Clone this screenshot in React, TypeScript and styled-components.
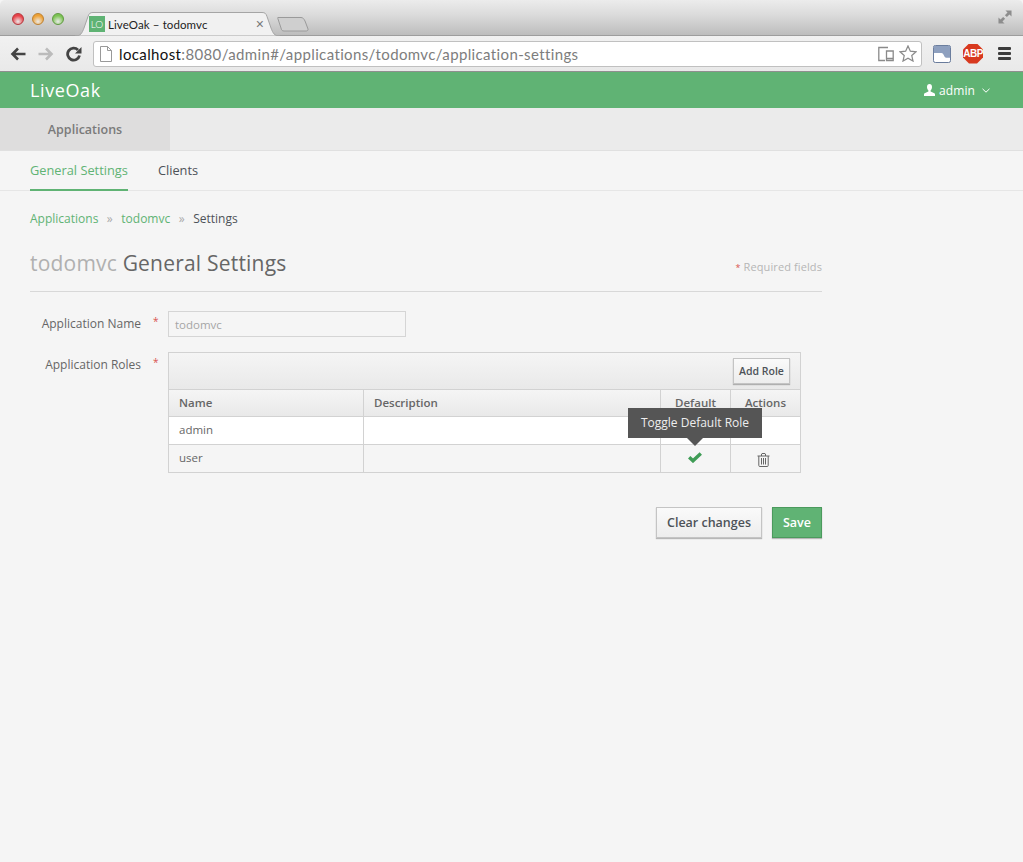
import React from 'react';
import styled, { createGlobalStyle } from 'styled-components';

const GlobalStyle = createGlobalStyle`
  html, body {
    margin: 0;
    padding: 0;
    height: 100%;
    background: #f5f5f5;
  }
  body {
    font-family: 'Open Sans', 'Noto Sans', sans-serif;
    color: #4d5258;
  }
  * {
    box-sizing: border-box;
  }
`;

const Page = styled.div`
  width: 1023px;
  height: 862px;
  overflow: hidden;
  display: flex;
  flex-direction: column;
  background: #f5f5f5;
`;

/* browser window */
const TitleBar = styled.div`
  height: 36px;
  display: flex;
  align-items: flex-end;
  padding: 0 11px 0 12px;
  background: linear-gradient(#ececec 0%, #dcdcdc 40%, #bdbdbd 100%);
  border-bottom: 1px solid #9d9d9d;
  border-radius: 5px 5px 0 0;
`;

const Lights = styled.div`
  display: flex;
  gap: 8px;
  align-self: flex-start;
  margin-top: 13px;
`;

const Light = styled.span<{ $color: string; $edge: string }>`
  width: 12px;
  height: 12px;
  border-radius: 50%;
  border: 1px solid ${(p) => p.$edge};
  background: radial-gradient(circle at 50% 75%, #fff8 0%, ${(p) => p.$color} 65%);
`;

const TabWrap = styled.div`
  position: relative;
  width: 205px;
  height: 24px;
  margin-left: 11px;
  margin-bottom: -1px;
  display: flex;
  align-items: center;
  padding-left: 14px;
  z-index: 1;
`;

const TabShape = styled.svg`
  position: absolute;
  left: 0;
  top: 0;
`;

const Favicon = styled.span`
  position: relative;
  width: 16px;
  height: 16px;
  background: #5fb374;
  color: #fff;
  font-family: 'Lato', sans-serif;
  font-weight: 300;
  font-size: 10px;
  line-height: 16px;
  text-align: center;
`;

const TabTitle = styled.span`
  position: relative;
  margin-left: 3px;
  font-family: 'Lato', sans-serif;
  font-size: 11.5px;
  color: #222;
  flex: 1;
  letter-spacing: 0.1px;
`;

const TabClose = styled.span`
  position: relative;
  font-family: 'Liberation Sans', sans-serif;
  font-size: 14px;
  color: #777;
  margin-right: 16px;
`;

const NewTab = styled.svg`
  margin-left: -3px;
  margin-bottom: 3px;
`;

const Resize = styled.svg`
  margin-left: auto;
  align-self: flex-start;
  margin-top: 10px;
`;

const ToolBar = styled.div`
  height: 36px;
  display: flex;
  align-items: center;
  background: linear-gradient(#f1f1f1, #e9e9e9);
  border-bottom: 1px solid #8f8f8f;
  padding: 0 12px 0 10px;
`;

const NavIcon = styled.svg`
  flex: none;
  margin-right: 12px;
  &:nth-child(3) {
    margin-right: 11px;
  }
`;

const UrlBox = styled.div`
  width: 830px;
  height: 26px;
  background: #fff;
  border: 1px solid #c0c0c0;
  border-radius: 3px;
  display: flex;
  align-items: center;
  padding: 0 4px 0 6px;
`;

const UrlText = styled.span`
  font-family: 'Lato', sans-serif;
  font-size: 15px;
  color: #7d7d7d;
  margin-left: 7px;
  flex: 1;
  letter-spacing: 0.37px;
  b {
    font-weight: 400;
    color: #111;
  }
`;

const DeviceIcon = styled.svg`
  margin-right: 5px;
`;

const ToolRight = styled.div`
  display: flex;
  align-items: center;
  margin-left: 11px;
  gap: 12px;
`;

const Abp = styled.span`
  width: 20px;
  height: 20px;
  margin-right: 3px;
  clip-path: polygon(30% 0, 70% 0, 100% 30%, 100% 70%, 70% 100%, 30% 100%, 0 70%, 0 30%);
  background: #d8391f;
  color: #fff;
  font-family: 'Liberation Sans', sans-serif;
  font-size: 10px;
  font-weight: 700;
  letter-spacing: -0.5px;
  line-height: 20px;
  text-align: center;
`;

/* app */
const Header = styled.header`
  height: 36px;
  background: #60b374;
  color: #fff;
  display: flex;
  align-items: center;
  justify-content: space-between;
  padding: 0 33px 0 30px;
`;

const Brand = styled.span`
  font-size: 18px;
  letter-spacing: 0.6px;
`;

const UserMenu = styled.div`
  display: flex;
  align-items: center;
  font-size: 12px;
  letter-spacing: 0.1px;
  span {
    margin: 0 7px 0 4px;
  }
`;

const SubNav = styled.nav`
  height: 43px;
  background: #ebebeb;
  border-bottom: 1px solid #e0e0e0;
  display: flex;
`;

const SubNavItem = styled.div`
  width: 170px;
  height: 42px;
  background: #dedddd;
  color: #7a7a7a;
  font-size: 12.5px;
  font-weight: 600;
  display: flex;
  align-items: center;
  justify-content: center;
`;

const Tabs = styled.div`
  height: 40px;
  display: flex;
  gap: 30px;
  padding-left: 30px;
  border-bottom: 1px solid #e6e6e6;
`;

const TabLink = styled.div<{ $active?: boolean }>`
  height: 40px;
  font-size: 12.8px;
  line-height: 38px;
  color: ${(p) => (p.$active ? '#60b374' : '#4d5258')};
  border-bottom: ${(p) => (p.$active ? '2px solid #60b374' : 'none')};
`;

const Main = styled.main`
  width: 822px;
  padding-left: 30px;
`;

const Breadcrumb = styled.div`
  display: flex;
  align-items: center;
  height: 18px;
  margin-top: 18px;
  font-size: 12px;
`;

const Crumb = styled.span<{ $link?: boolean }>`
  color: ${(p) => (p.$link ? '#60b374' : '#4d5258')};
`;

const CrumbSep = styled.span`
  color: #aaa;
  margin: 0 8.5px;
`;

const TitleRow = styled.div`
  height: 47px;
  margin-top: 18px;
  display: flex;
  justify-content: space-between;
  align-items: center;
  border-bottom: 1px solid #d8d8d8;
  padding-bottom: 10px;
`;

const Title = styled.h1`
  margin: 0;
  font-size: 21px;
  font-weight: 400;
  letter-spacing: 0.2px;
  color: #666;
  em {
    font-style: normal;
    color: #b0b0b0;
  }
`;

const Required = styled.span`
  font-size: 11px;
  color: #b5b5b5;
  margin-top: 7px;
  letter-spacing: 0.1px;
  i {
    font-style: normal;
    font-size: 9px;
    color: #d9534f;
  }
`;

const FormRow = styled.div<{ $top: number }>`
  display: flex;
  margin-top: ${(p) => p.$top}px;
`;

const Label = styled.label`
  width: 111px;
  text-align: right;
  font-size: 12px;
  color: #666;
  line-height: 26px;
`;

const Star = styled.span`
  width: 27px;
  padding-left: 12px;
  color: #d9534f;
  font-size: 10px;
  line-height: 20px;
`;

const Input = styled.div`
  width: 238px;
  height: 26px;
  border: 1px solid #d5d5d5;
  background: #f5f5f5;
  color: #a5a5a5;
  font-size: 11.5px;
  line-height: 25px;
  padding-left: 6px;
`;

const RolesTable = styled.div`
  position: relative;
  width: 633px;
  border: 1px solid #d2d2d2;
`;

const TableBar = styled.div`
  height: 37px;
  display: flex;
  align-items: center;
  justify-content: flex-end;
  padding-right: 10px;
  background: linear-gradient(#f5f5f5, #e9e9e9);
  border-bottom: 1px solid #d2d2d2;
`;

const Btn = styled.button`
  font-family: inherit;
  font-size: 12.5px;
  font-weight: 600;
  color: #4d5258;
  background: linear-gradient(#fafafa, #ededed);
  border: 1px solid #c4c4c4;
  box-shadow: 0 1px 1px rgba(0, 0, 0, 0.25);
  padding: 0;
`;

const AddRole = styled(Btn)`
  width: 57px;
  height: 26px;
  font-size: 10.5px;
`;

const Row = styled.div<{ $kind: 'head' | 'white' | 'plain' }>`
  display: grid;
  grid-template-columns: 195px 297px 70px 1fr;
  height: ${(p) => (p.$kind === 'head' ? 27 : 28)}px;
  background: ${(p) =>
    p.$kind === 'head' ? 'linear-gradient(#f5f5f5, #e9e9e9)' : p.$kind === 'white' ? '#fff' : '#f5f5f5'};
  border-bottom: 1px solid #d2d2d2;
  &:last-child {
    border-bottom: none;
    height: 27px;
  }
`;

const Cell = styled.div<{ $head?: boolean; $center?: boolean }>`
  display: flex;
  align-items: center;
  justify-content: ${(p) => (p.$center ? 'center' : 'flex-start')};
  padding: 0 0 2px ${(p) => (p.$center ? 0 : 10)}px;
  font-size: 11.5px;
  font-weight: ${(p) => (p.$head ? 600 : 400)};
  color: #666;
  border-right: 1px solid #d2d2d2;
  &:last-child {
    border-right: none;
  }
`;

const Tooltip = styled.div`
  position: absolute;
  left: 459px;
  top: 55px;
  width: 134px;
  height: 30px;
  background: #555;
  color: #eee;
  font-size: 12px;
  line-height: 30px;
  text-align: center;
  &::after {
    content: '';
    position: absolute;
    left: 59px;
    top: 30px;
    border-style: solid;
    border-width: 8px 8px 0;
    border-color: #555 transparent transparent;
  }
`;

const CheckIcon = styled.svg`
  margin: -1px 2px 0 0;
`;

const TrashIcon = styled.svg`
  margin: 4px 4px 0 0;
`;

const Actions = styled.div`
  display: flex;
  justify-content: flex-end;
  gap: 10px;
  margin-top: 34px;
`;

const ClearBtn = styled(Btn)`
  width: 106px;
  height: 31px;
`;

const SaveBtn = styled(Btn)`
  width: 50px;
  height: 31px;
  color: #fff;
  background: #60b374;
  border-color: #4b9a5d;
`;

const App: React.FC = () => {
  return (
    <Page>
      <GlobalStyle />
      <TitleBar>
        <Lights>
          <Light $color="#e8434a" $edge="#b5363c" />
          <Light $color="#eda135" $edge="#bd8030" />
          <Light $color="#7cc353" $edge="#5f9a40" />
        </Lights>
        <TabWrap>
          <TabShape width="205" height="24" viewBox="0 0 205 24">
            <path d="M0 24C6 24 7 21 9 16L13 4.5C14 1.5 15 .5 18 .5H187C190 .5 191 1.5 192 4.5L196 16C198 21 199 24 205 24Z" fill="#f1f1f1" stroke="#a5a5a5" />
          </TabShape>
          <Favicon>LO</Favicon>
          <TabTitle>LiveOak – todomvc</TabTitle>
          <TabClose>×</TabClose>
        </TabWrap>
        <NewTab width="32" height="16" viewBox="0 0 32 16">
          <path d="M1 1.5H24C26 1.5 27 3 28 5L31 13C31.5 14.5 30 15 29 15H7C5 15 4.5 14 4 12L1 3C0.7 2 0.5 1.5 1 1.5Z" fill="#cfcfcf" stroke="#9a9a9a" />
        </NewTab>
        <Resize width="14" height="14" viewBox="0 0 15 15" fill="#8d8d8d">
          <path d="M8 0.5H14.5V7L12.3 4.8L9.5 7.6L7.4 5.5L10.2 2.7ZM7 14.5H0.5V8L2.7 10.2L5.5 7.4L7.6 9.5L4.8 12.3Z" />
        </Resize>
      </TitleBar>
      <ToolBar>
        <NavIcon width="16" height="16" viewBox="0 0 16 16" fill="none" stroke="#444" strokeWidth="2.6">
          <path d="M15.5 8H3M8 2.5L2.5 8L8 13.5" />
        </NavIcon>
        <NavIcon width="16" height="16" viewBox="0 0 16 16" fill="none" stroke="#bbb" strokeWidth="2.6">
          <path d="M.5 8H13M8 2.5L13.5 8L8 13.5" />
        </NavIcon>
        <NavIcon width="16" height="16" viewBox="0 0 16 16" fill="none" stroke="#444" strokeWidth="2.8">
          <path d="M13.5 9.5A6 6 0 1 1 12 4" />
          <path d="M15.5 1V7.5H9Z" fill="#444" stroke="none" />
        </NavIcon>
        <UrlBox>
          <svg width="12" height="16" viewBox="0 0 12 16" fill="#fff" stroke="#999">
            <path d="M.5 .5H7.5L11.5 4.5V15.5H.5ZM7.5 .5V4.5H11.5" />
          </svg>
          <UrlText>
            <b>localhost</b>:8080/admin#/applications/todomvc/application-settings
          </UrlText>
          <DeviceIcon width="16" height="16" viewBox="0 0 16 16" fill="none" stroke="#8a8a8a" strokeWidth="1.3">
            <path d="M10 1.5H.8V14.5H7M8.5 5H15.2V14.5H8.5ZM8.5 12.5H15.2" />
          </DeviceIcon>
          <svg width="18" height="17" viewBox="0 0 19 18" fill="#fff" stroke="#8a8a8a" strokeWidth="1.3">
            <path d="M9.5 1L12 6.6L18 7.2L13.5 11.2L14.8 17L9.5 14L4.2 17L5.5 11.2L1 7.2L7 6.6Z" />
          </svg>
        </UrlBox>
        <ToolRight>
          <svg width="18" height="18" viewBox="0 0 19 19">
            <rect x=".5" y=".5" width="18" height="18" rx="2" fill="#fff" stroke="#5e7295" />
            <path d="M1 1H18V13.5H14C11.5 13.5 11.5 8.5 9 8.5H1Z" fill="#8ea0bf" />
          </svg>
          <Abp>ABP</Abp>
          <svg width="13" height="13" viewBox="0 0 13 13" fill="#3c3c3c">
            <rect width="13" height="3" rx="1" />
            <rect y="5" width="13" height="3" rx="1" />
            <rect y="10" width="13" height="3" rx="1" />
          </svg>
        </ToolRight>
      </ToolBar>

      <Header>
        <Brand>LiveOak</Brand>
        <UserMenu>
          <svg width="11" height="12" viewBox="0 0 11 12" fill="#fff">
            <path d="M5.5 0C3.9 0 3 1.2 3 2.9C3 4.4 3.6 5.6 4.4 6.4V7.4L.6 9.2C.2 9.4 0 9.8 0 10.2V12H11V10.2C11 9.8 10.8 9.4 10.4 9.2L6.6 7.4V6.4C7.4 5.6 8 4.4 8 2.9C8 1.2 7.1 0 5.5 0Z" />
          </svg>
          <span>admin</span>
          <svg width="8" height="5" viewBox="0 0 8 5" fill="none" stroke="#fff" strokeWidth="1">
            <path d="M.5 .8L4 4.2L7.5 .8" />
          </svg>
        </UserMenu>
      </Header>
      <SubNav>
        <SubNavItem>Applications</SubNavItem>
      </SubNav>
      <Tabs>
        <TabLink $active>General Settings</TabLink>
        <TabLink>Clients</TabLink>
      </Tabs>
      <Main>
        <Breadcrumb>
          <Crumb $link>Applications</Crumb>
          <CrumbSep>»</CrumbSep>
          <Crumb $link>todomvc</Crumb>
          <CrumbSep>»</CrumbSep>
          <Crumb>Settings</Crumb>
        </Breadcrumb>
        <TitleRow>
          <Title>
            <em>todomvc</em> General Settings
          </Title>
          <Required>
            <i>*</i> Required fields
          </Required>
        </TitleRow>
        <FormRow $top={19}>
          <Label>Application Name</Label>
          <Star>*</Star>
          <Input>todomvc</Input>
        </FormRow>
        <FormRow $top={15}>
          <Label>Application Roles</Label>
          <Star>*</Star>
          <RolesTable>
            <Tooltip>Toggle Default Role</Tooltip>
            <TableBar>
              <AddRole>Add Role</AddRole>
            </TableBar>
            <Row $kind="head">
              <Cell $head>Name</Cell>
              <Cell $head>Description</Cell>
              <Cell $head $center>Default</Cell>
              <Cell $head $center>Actions</Cell>
            </Row>
            <Row $kind="white">
              <Cell>admin</Cell>
              <Cell />
              <Cell />
              <Cell />
            </Row>
            <Row $kind="plain">
              <Cell>user</Cell>
              <Cell />
              <Cell $center>
                <CheckIcon width="14" height="11" viewBox="0 0 14 11" fill="none" stroke="#3f9c56" strokeWidth="3.4">
                  <path d="M1.2 5.2L5 8.8L12.8 1.4" />
                </CheckIcon>
              </Cell>
              <Cell $center>
                <TrashIcon width="13" height="14" viewBox="0 0 13 14" fill="none" stroke="#666" strokeWidth="1">
                  <path d="M.5 3H12.5M1.8 3V12.5A1 1 0 0 0 2.8 13.5H10.2A1 1 0 0 0 11.2 12.5V3M4.5 3V1L5 .5H8L8.5 1V3M4.5 5V11.5M6.5 5V11.5M8.5 5V11.5" />
                </TrashIcon>
              </Cell>
            </Row>
          </RolesTable>
        </FormRow>
        <Actions>
          <ClearBtn>Clear changes</ClearBtn>
          <SaveBtn>Save</SaveBtn>
        </Actions>
      </Main>
    </Page>
  );
};

export default App;
